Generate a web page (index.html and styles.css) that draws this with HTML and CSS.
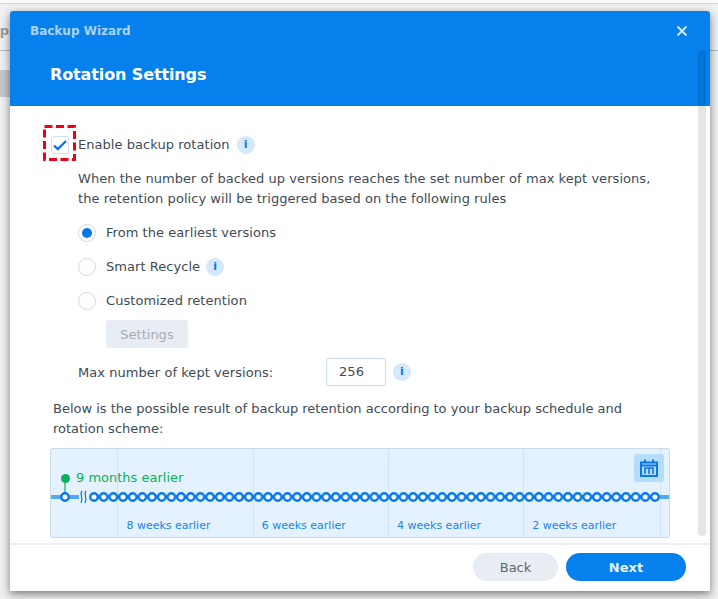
FILE: index.html
```html
<!DOCTYPE html>
<html lang="en">
<head>
<meta charset="utf-8">
<title>Backup Wizard</title>
<link rel="stylesheet" href="styles.css">
</head>
<body>
<div class="behind">
  <div class="behind-top"></div>
  <span class="behind-text">p</span>
  <div class="behind-line"></div>
  <div class="behind-band"></div>
</div>
<main class="dialog">
  <header class="head">
    <div class="head-top">
      <span class="app-title">Backup Wizard</span>
      <svg class="close" width="12" height="12" viewBox="0 0 12 12"><path d="M1.5 1.5l9 9M10.5 1.5l-9 9" stroke="#cfe6fb" stroke-width="2" fill="none"/></svg>
    </div>
    <h1 class="step-title">Rotation Settings</h1>
  </header>
  <section class="content">
    <div class="enable-row">
      <span class="check">
        <svg width="14" height="11" viewBox="0 0 14 11"><path d="M1 5.5l3.8 3.6L13 1" stroke="#0678ea" stroke-width="2.4" fill="none"/></svg>
        <svg class="focus-box" width="33" height="36" viewBox="0 0 33 36"><rect x="1.5" y="1.5" width="30" height="33" fill="none" stroke="#f00014" stroke-width="3" stroke-dasharray="8 3.5"/></svg>
      </span>
      <span class="label">Enable backup rotation</span>
      <span class="info">i</span>
    </div>
    <p class="desc">When the number of backed up versions reaches the set number of max kept versions,<br>the retention policy will be triggered based on the following rules</p>
    <div class="options">
      <div class="radio-row"><span class="radio on"></span><span class="label">From the earliest versions</span></div>
      <div class="radio-row"><span class="radio"></span><span class="label">Smart Recycle</span><span class="info">i</span></div>
      <div class="radio-row"><span class="radio"></span><span class="label">Customized retention</span></div>
      <button class="settings" type="button">Settings</button>
    </div>
    <div class="max-row">
      <span class="max-label">Max number of kept versions:</span>
      <span class="input">256</span>
      <span class="info">i</span>
    </div>
    <p class="below">Below is the possible result of backup retention according to your backup schedule and<br>rotation scheme:</p>
    <div class="timeline">
      <div class="col col-a"></div>
      <div class="col col-b"><span class="week">8 weeks earlier</span></div>
      <div class="col col-b"><span class="week">6 weeks earlier</span></div>
      <div class="col col-b"><span class="week">4 weeks earlier</span></div>
      <div class="col col-b col-last"><span class="week">2 weeks earlier</span></div>
      <div class="col col-c"></div>
      <div class="earlier"><span class="dot"></span>9 months earlier</div>
      <svg class="track" width="618" height="40" viewBox="0 0 618 40">
        <defs>
          <pattern id="rings" x="38.2" y="0" width="9.672" height="40" patternUnits="userSpaceOnUse">
            <circle cx="4.8" cy="20" r="3.7" fill="#fff" stroke="#0678ea" stroke-width="2.4"/>
          </pattern>
        </defs>
        <rect x="0" y="18" width="618" height="4" fill="#54a8f0"/>
        <path d="M14 4v12" stroke="#0bb05a" stroke-width="1.2"/>
        <circle cx="14" cy="20" r="3.7" fill="#fff" stroke="#0678ea" stroke-width="2.4"/>
        <rect x="28" y="14" width="12" height="12" fill="#e3f2fe"/>
        <path d="M31 14c-3 3 2 7-1 12M35 14c-3 3 2 7-1 12" stroke="#0678ea" stroke-width="1.2" fill="none"/>
        <rect x="38.2" y="14" width="570.6" height="12" fill="url(#rings)"/>
      </svg>
      <span class="cal">
        <svg width="18" height="18" viewBox="0 0 18 18"><path d="M1 3.5h16V17H1zM1 6.5h16M5 .5v4M13 .5v4" stroke="#0678ea" stroke-width="2" fill="none"/><path d="M5 15V9h8v6M9 9v6" stroke="#0678ea" stroke-width="1.6" fill="none"/></svg>
      </span>
    </div>
  </section>
  <footer class="foot">
    <button class="btn back" type="button">Back</button>
    <button class="btn next" type="button">Next</button>
  </footer>
  <div class="scrollbar"></div>
</main>
</body>
</html>
```
FILE: styles.css
```css
* { box-sizing: border-box; }
html, body { margin: 0; height: 599px; overflow: hidden; }
body {
  background: #eef0f1;
  font-family: "DejaVu Sans", sans-serif;
  font-size: 13px;
  color: #414b55;
  letter-spacing: .05px;
  padding: 11px 8px 8px 10px;
}
.behind { position: absolute; inset: 0; overflow: hidden; }
.behind-top { height: 4px; background: #f8f9f9; border-bottom: 1px solid #d2d4d6; }
.behind-text {
  position: absolute;
  right: 709px; top: 23px;
  font-size: 13px; font-weight: 700; line-height: 16px;
  color: #9a9c9e;
}
.behind-line { position: absolute; left: 0; right: 0; top: 50px; height: 1px; background: #b8babc; }
.behind-band { position: absolute; left: 0; top: 70px; width: 10px; height: 27px; background: #c4c6c8; }
.dialog {
  position: relative;
  width: 700px;
  height: 580px;
  background: #fff;
  border-radius: 3px 3px 1px 1px;
  box-shadow: 0 3px 9px rgba(0, 0, 0, .5);
  display: flex;
  flex-direction: column;
  overflow: hidden;
}
.head { height: 95px; background: #0680ec; padding: 0 22px 0 20px; flex: none; }
.head-top { display: flex; justify-content: space-between; align-items: center; height: 40px; }
.app-title { font-size: 12px; font-weight: 700; color: #a9d3f8; letter-spacing: 0; }
.step-title { margin: 12px 0 0 20px; font-size: 16px; line-height: 24px; font-weight: 700; color: #fff; letter-spacing: -.12px; }
.content { flex: 1; padding: 26px 40px 0 40px; overflow: hidden; min-height: 0; }
.enable-row { display: flex; align-items: center; height: 26px; }
.check {
  position: relative;
  width: 18px; height: 18px;
  margin: 0 9px 0 1px;
  border: 1px solid #cfe0ee; border-radius: 3px;
  display: flex; align-items: center; justify-content: center;
  background: #fff;
  flex: none;
}
.focus-box { position: absolute; left: -9px; top: -12px; }
.label { line-height: 18px; }
.info {
  width: 18px; height: 18px;
  margin-left: 7px;
  border-radius: 50%;
  background: #d5e9fa;
  color: #0678ea;
  font-size: 11px;
  font-weight: 700;
  line-height: 18px;
  text-align: center;
  flex: none;
}
.desc { margin: 11px 0 0 28px; line-height: 20px; white-space: nowrap; }
.options { margin: 7px 0 0 28px; }
.radio-row { display: flex; align-items: center; height: 34px; }
.radio-row .info { margin-left: 6px; }
.radio {
  width: 18px; height: 18px;
  margin-right: 10px;
  border: 1px solid #cfdbe6;
  border-radius: 50%;
  background: #fff;
  display: flex; align-items: center; justify-content: center;
  flex: none;
}
.radio.on::after { content: ""; width: 10px; height: 10px; border-radius: 50%; background: #0678ea; }
.settings {
  display: block;
  width: 82px; height: 28px;
  margin: 2px 0 0 28px;
  border: 0; border-radius: 3px;
  background: #e8edf3;
  color: #a4adb6;
  font: 13px "DejaVu Sans", sans-serif;
}
.max-row { display: flex; align-items: center; margin: 10px 0 0 28px; height: 28px; }
.max-label { width: 248px; }
.input {
  width: 60px; height: 28px;
  border: 1px solid #c8dcec; border-radius: 3px;
  padding-left: 12px;
  line-height: 26px;
  color: #414b55;
}
.max-row .info { margin-left: 7px; }
.below { margin: 13px 0 0 3px; line-height: 20px; white-space: nowrap; letter-spacing: 0; }
.timeline {
  position: relative;
  display: flex;
  width: 620px; height: 90px;
  margin-top: 9px;
  background: #e3f2fe;
  border: 1px solid #c9dcea;
  border-radius: 3px;
  letter-spacing: 0;
}
.col { height: 100%; border-right: 1px solid #cfe6f9; position: relative; flex: none; }
.col-a { width: 67.4px; }
.col-b { width: 135.3px; }
.col-b.col-last { width: 136.6px; }
.col-c { flex: 1; border-right: 0; }
.week { position: absolute; left: 8px; top: 70px; font-size: 11px; line-height: 14px; color: #1a84e8; white-space: nowrap; }
.earlier {
  position: absolute; left: 10px; top: 20px;
  display: flex; align-items: center;
  font-size: 13px; line-height: 18px; color: #0bb05a;
}
.dot { width: 9px; height: 9px; border-radius: 50%; background: #0bb05a; margin-right: 6px; }
.track { position: absolute; left: 0; top: 28px; }
.cal {
  position: absolute; right: 5px; top: 5px;
  width: 30px; height: 28px;
  border-radius: 3px;
  background: #b6dcfb;
  display: flex; align-items: center; justify-content: center;
}
.foot {
  height: 48px;
  flex: none;
  border-top: 2px solid #eceef0;
  display: flex; justify-content: flex-end; align-items: flex-start;
  gap: 8px;
  padding: 8px 24px 0 0;
  background: #fff;
}
.btn { width: 85px; height: 28px; border: 0; border-radius: 14px; font: 13px "DejaVu Sans", sans-serif; }
.back { background: #e8edf3; color: #5d6770; }
.next { width: 120px; background: #0680ec; color: #e8f3fd; font-weight: 700; }
.scrollbar { position: absolute; right: 4px; top: 39px; width: 8px; height: 486px; background: rgba(0, 0, 0, .1); border-radius: 4px; }
```
